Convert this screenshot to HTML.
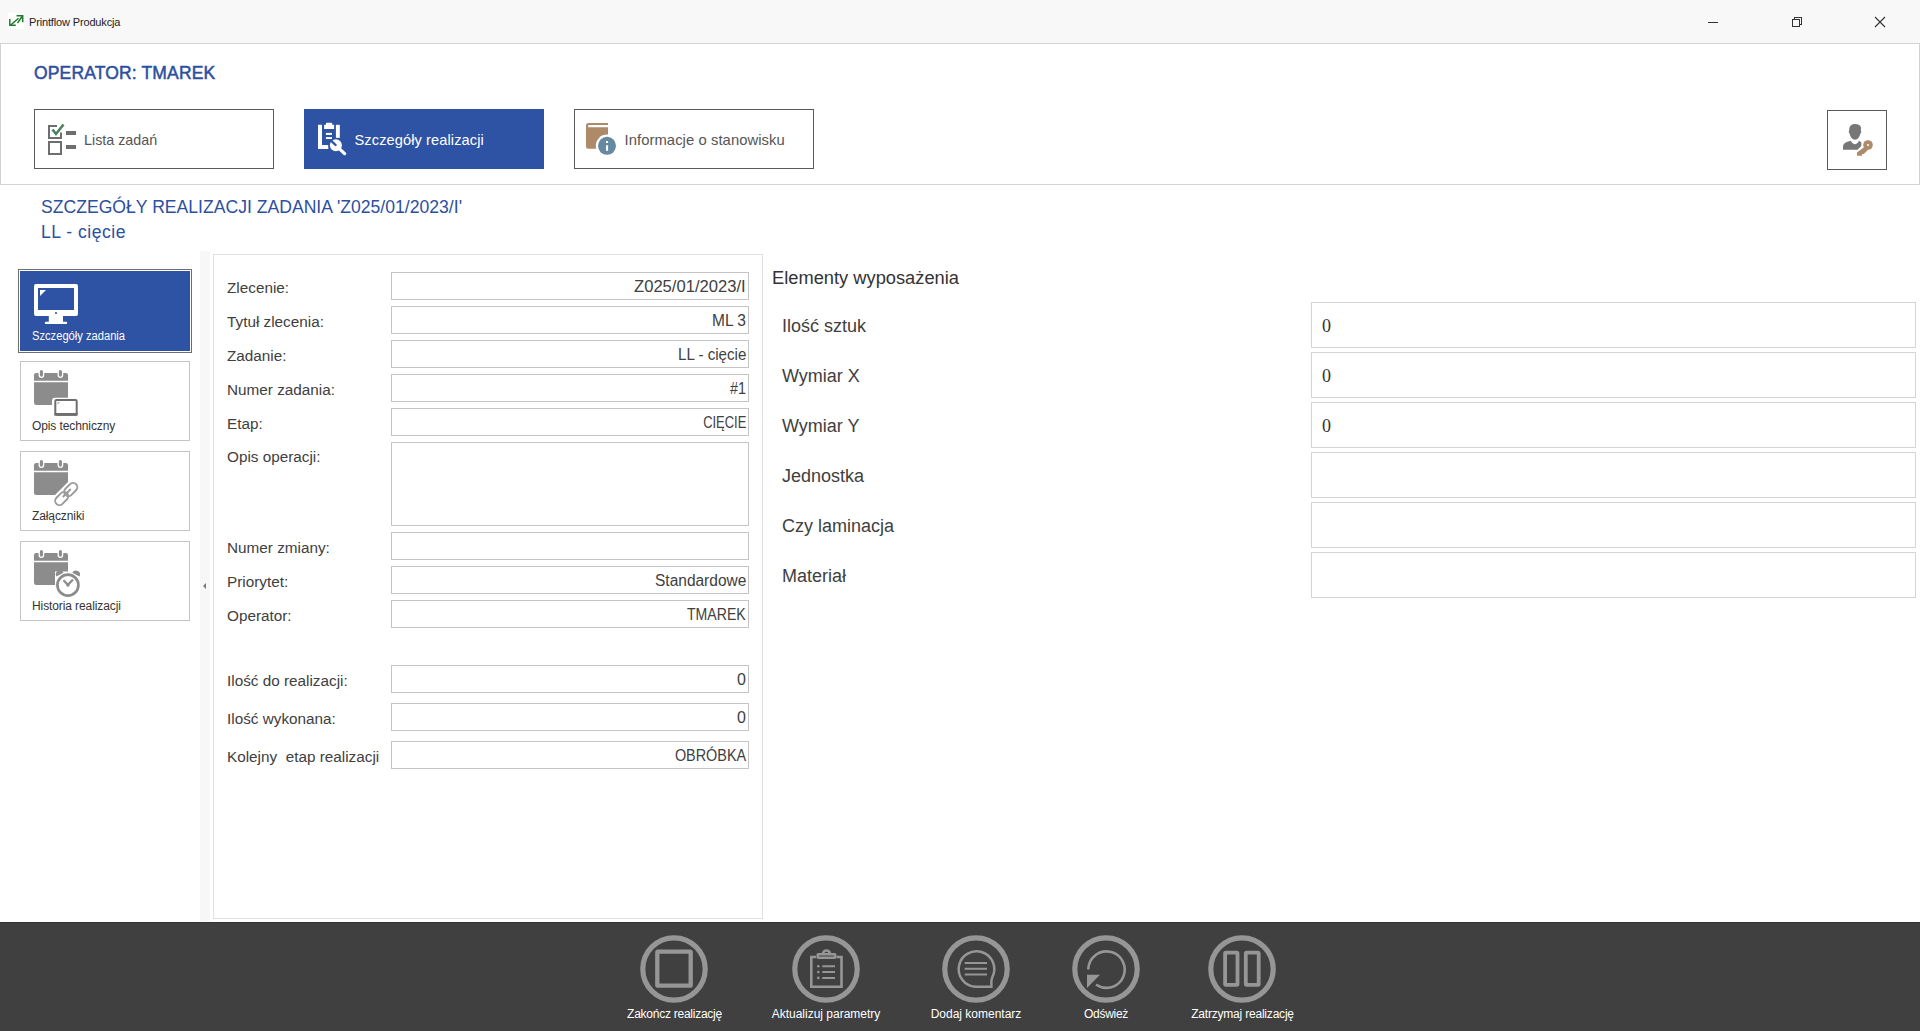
<!DOCTYPE html>
<html><head><meta charset="utf-8">
<style>
*{box-sizing:border-box;margin:0;padding:0}
html,body{width:1920px;height:1031px;overflow:hidden;background:#fff}
body{position:relative;font-family:"Liberation Sans",sans-serif;color:#333}
.a{position:absolute}
.t{position:absolute;white-space:pre;line-height:1}
svg{position:absolute;overflow:visible}
.hbtn{position:absolute;top:109px;width:240px;height:60px;border:1px solid #5a5a5a;background:#fff}
.hbtn.sel{background:#2e52a4;border-color:#2e52a4}
.side{position:absolute;left:20px;width:170px;height:80px;border:1px solid #c4c4c4;background:#fff}
.side.sel{background:#2e52a4;border:none;outline:1px solid #fff;box-shadow:0 0 0 2px #6e6e6e}
.lbl{position:absolute;left:227px;font-size:15.3px;color:#404040;white-space:pre;line-height:1}
.inp{position:absolute;left:391px;width:358px;height:28px;border:1px solid #c4c4c4;background:#fff}
.val{position:absolute;right:2px;top:5.5px;font-size:16px;color:#404040;white-space:pre;line-height:1;transform-origin:100% 50%}
.rl{position:absolute;left:782px;font-size:18px;color:#404040;white-space:pre;line-height:1}
.rinp{position:absolute;left:1311px;width:605px;height:46px;border:1px solid #d4d4d4;background:#fff}
.rv{position:absolute;left:10px;top:14px;font-family:"Liberation Serif",serif;font-size:18px;color:#333;line-height:1}
.sl{position:absolute;left:32px;font-size:12px;color:#333;white-space:pre;line-height:1}
.bl{position:absolute;top:1008px;font-size:12px;color:#fff;white-space:pre;line-height:1;transform:translateX(-50%)}
</style></head>
<body>

<div class="a" style="left:0;top:0;width:1920px;height:43px;background:#f8f8f8"></div>
<svg style="left:8px;top:13px" width="16" height="16" viewBox="0 0 16 16">
<rect x="0" y="0" width="16" height="16" fill="#fff"/>
<g stroke="#1e7b2c" stroke-width="1.5" fill="none">
<path d="M10.5 5.2 L2.5 12.2"/><path d="M1.8 6 V12.3 H7.8"/>
<path d="M14 3.5 L9.5 10.2"/><path d="M8.5 2.8 H14.7 V9.3"/>
</g></svg>
<div class="t" style="left:29px;top:17px;font-size:11px;color:#222;letter-spacing:-0.15px">Printflow Produkcja</div>
<svg style="left:1700px;top:10px" width="200" height="25" viewBox="0 0 200 25">
<g stroke="#333" stroke-width="1" fill="none" shape-rendering="crispEdges">
<path d="M8 12.5 H18"/>
<rect x="92.5" y="9.5" width="7" height="7"/>
<path d="M94.5 9.5 V7.5 H101.5 V14.5 H99.5"/>
</g>
<g stroke="#333" stroke-width="1.1" fill="none">
<path d="M175 7 L185 17 M185 7 L175 17"/>
</g></svg>
<div class="a" style="left:0;top:43px;width:1920px;height:142px;border:1px solid #d2d2d2;background:#fff"></div>
<div class="t" style="left:34px;top:65px;font-size:17.5px;font-weight:normal;-webkit-text-stroke:0.5px #2c4f9f;color:#2c4f9f;letter-spacing:0.15px">OPERATOR: TMAREK</div>
<div class="hbtn" style="left:34px"></div>
<div class="hbtn sel" style="left:304px"></div>
<div class="hbtn" style="left:574px"></div>
<div class="a" style="left:1827px;top:110px;width:60px;height:60px;border:1px solid #5a5a5a;background:#fff"></div>
<svg style="left:40px;top:115px" width="50" height="50" viewBox="0 0 50 50">
<g fill="none" stroke="#6e6e6e" stroke-width="2">
<path d="M17 11 H9 V23 H21 V17.5"/>
<rect x="9" y="27" width="12" height="12"/>
</g>
<rect x="26" y="16" width="10" height="4" fill="#6e6e6e"/>
<rect x="26" y="30" width="10" height="4" fill="#6e6e6e"/>
<path d="M12.5 14.5 L16 19 L23.5 9.5" fill="none" stroke="#4e8060" stroke-width="2.6"/>
</svg>
<div class="t" style="left:84px;top:132.5px;font-size:14.3px;color:#555">Lista zadań</div>
<svg style="left:305px;top:112px" width="50" height="50" viewBox="0 0 50 50">
<g fill="#fff">
<path d="M13 12.8 H17 V33 H23.3 V37 H13 Z"/>
<rect x="30.9" y="12.8" width="3.9" height="13.1"/>
<rect x="19.1" y="12.8" width="10" height="4.2"/>
<rect x="20.9" y="10.7" width="6.3" height="3" rx="1"/>
<rect x="20.9" y="20.9" width="6.1" height="2"/>
<rect x="20.9" y="25.1" width="6.1" height="1.9"/>
</g>
<circle cx="30.9" cy="33.2" r="7.4" fill="#2e52a4"/>
<circle cx="30.9" cy="33.2" r="6" fill="#fff"/>
<path d="M26 28.6 L30.6 33" stroke="#2e52a4" stroke-width="2.3" stroke-linecap="round"/>
<path d="M34.2 36.6 L39.6 41.6" stroke="#fff" stroke-width="3.3" stroke-linecap="round"/>
</svg>
<div class="t" style="left:354.5px;top:132.5px;font-size:14.6px;color:#fff;letter-spacing:0.1px">Szczegóły realizacji</div>
<svg style="left:578px;top:115px" width="50" height="48" viewBox="0 0 50 48">
<path d="M8 10.5 Q8 8 10.5 8 H30 V10 H10.2 V12.3 H30 V24.5 A11 11 0 0 0 18.5 35 V33.7 H10.5 Q8 33.7 8 31.2 Z" fill="#ad8a68"/>
<circle cx="29" cy="30.8" r="11.2" fill="#fff"/><circle cx="29" cy="30.8" r="9" fill="#6589a0"/>
<rect x="28" y="26" width="2.1" height="2" fill="#fff"/>
<rect x="28" y="30.3" width="2.1" height="5.5" fill="#fff"/>
</svg>
<div class="t" style="left:624.5px;top:133px;font-size:14.8px;color:#555;letter-spacing:0.07px">Informacje o stanowisku</div>
<svg style="left:1820px;top:100px" width="100" height="90" viewBox="0 0 100 90">
<path d="M29.2 30.5 C29 26.5 31 24 35 24 C38 24 40 25 40.5 26.5 C41.2 27 41.2 29 40.8 30.5 C41.5 31 41.3 33 40.4 33.5 C39.7 37 37.5 39.7 35 39.7 C32.5 39.7 30.3 37 29.6 33.5 C28.7 33 28.5 31 29.2 30.5 Z" fill="#777"/>
<path d="M23 49.8 V47 C23 44 25 42.5 27.5 41.8 L30.8 40.8 C32 43 33.5 44.2 34.8 44.2 C36.5 44.2 38 43 39 40.8 L41.3 42.3 V46 L37.5 49.8 Z" fill="#777"/>
<circle cx="48" cy="45" r="4.8" fill="#ad8a68"/>
<circle cx="48" cy="45" r="1" fill="#fff"/>
<path d="M45.3 46.3 L48.4 49.4 L43.8 54 H42 V55.8 H37 V52.6 Z" fill="#ad8a68"/>
</svg>
<div class="t" style="left:41px;top:198.5px;font-size:17.6px;color:#2c4f9f">SZCZEGÓŁY REALIZACJI ZADANIA 'Z025/01/2023/I'</div>
<div class="t" style="left:41px;top:223.5px;font-size:17.6px;color:#2c4f9f;letter-spacing:0.5px">LL - cięcie</div>
<div class="side sel" style="top:271px"></div>
<div class="side" style="top:361px"></div>
<div class="side" style="top:451px"></div>
<div class="side" style="top:541px"></div>
<svg style="left:34px;top:284px" width="44" height="40" viewBox="0 0 44 40">
<path fill="#fff" fill-rule="evenodd" d="M2 0 H42 Q44 0 44 2 V30 Q44 32 42 32 H2 Q0 32 0 30 V2 Q0 0 2 0 Z M4 4 V26 H40 V4 Z"/>
<path fill="#fff" d="M6 6 H12 L6 12 Z"/>
<rect x="14.8" y="32" width="14.2" height="6" fill="#fff"/>
<rect x="10.8" y="37.8" width="22.3" height="2.2" rx="1" fill="#fff"/>
<circle cx="22" cy="29" r="1" fill="#2e52a4"/>
</svg>
<div class="t" style="left:32px;top:329.8px;font-size:12px;color:#fff;transform:scaleX(0.93);transform-origin:0 50%">Szczegóły zadania</div>
<svg style="left:34px;top:373px" width="50" height="50" viewBox="0 0 50 50">
<path d="M0 2.2 Q0 0 2.2 0 H31.8 Q34 0 34 2.2 V7.7 H0 Z" fill="#8c8c8c"/>
<g fill="#8c8c8c" stroke="#fff" stroke-width="1.3"><rect x="5.2" y="-3.6" width="4.4" height="7.9" rx="2.2"/><rect x="24.2" y="-3.6" width="4.4" height="7.9" rx="2.2"/></g>
<path d="M0 9.2 H34 V24.8 H21 Q18 24.8 18 27.8 V32 H2.2 Q0 32 0 29.8 Z" fill="#8c8c8c"/>
<rect x="21.3" y="27.1" width="21.4" height="14.6" rx="1.2" fill="#fff" stroke="#6e6e6e" stroke-width="2"/>
<rect x="20.3" y="39.9" width="23.4" height="2.8" rx="1" fill="#6e6e6e"/>
<path d="M23.5 29.2 H26 L23.5 31.7 Z" fill="#aaa"/>
</svg>
<div class="t" style="left:32px;top:419.5px;font-size:12px;color:#333;letter-spacing:-0.1px">Opis techniczny</div>
<svg style="left:34px;top:463px" width="50" height="50" viewBox="0 0 50 50">
<path d="M0 2.2 Q0 0 2.2 0 H31.8 Q34 0 34 2.2 V7.7 H0 Z" fill="#8c8c8c"/>
<g fill="#8c8c8c" stroke="#fff" stroke-width="1.3"><rect x="5.2" y="-3.6" width="4.4" height="7.9" rx="2.2"/><rect x="24.2" y="-3.6" width="4.4" height="7.9" rx="2.2"/></g>
<path d="M0 9.2 H34 V19 L21 32 H2.2 Q0 32 0 29.8 Z" fill="#8c8c8c"/>
<g fill="none" stroke="#9a9a9a" stroke-width="1.9">
<rect x="32.5" y="19" width="8.5" height="15" rx="4.25" transform="rotate(45 36.75 26.5)"/>
<rect x="23.5" y="28" width="8.5" height="15" rx="4.25" transform="rotate(45 27.75 35.5)"/>
<path d="M28.8 34 L36.8 26"/>
</g>
</svg>
<div class="t" style="left:32px;top:509.5px;font-size:12px;color:#333;letter-spacing:-0.1px">Załączniki</div>
<svg style="left:34px;top:553px" width="50" height="50" viewBox="0 0 50 50">
<path d="M0 2.2 Q0 0 2.2 0 H31.8 Q34 0 34 2.2 V7.7 H0 Z" fill="#8c8c8c"/>
<g fill="#8c8c8c" stroke="#fff" stroke-width="1.3"><rect x="5.2" y="-3.6" width="4.4" height="7.9" rx="2.2"/><rect x="24.2" y="-3.6" width="4.4" height="7.9" rx="2.2"/></g>
<path d="M0 9.2 H34 V18.5 H21 V32 H2.2 Q0 32 0 29.8 Z" fill="#8c8c8c"/>
<circle cx="33.9" cy="32.1" r="10.5" fill="#fff" stroke="#8c8c8c" stroke-width="2.7"/>
<path d="M22.3 23.5 A4 4 0 0 1 29.5 19.8 Z" fill="#8c8c8c"/>
<path d="M45.5 23.5 A4 4 0 0 0 38.3 19.8 Z" fill="#8c8c8c"/>
<path d="M29.4 27.2 L33.9 31.8 L39 26.5" fill="none" stroke="#8c8c8c" stroke-width="2.2"/>
<circle cx="33.9" cy="32" r="1.7" fill="#8c8c8c"/>
</svg>
<div class="t" style="left:32px;top:599.8px;font-size:12px;color:#333;letter-spacing:-0.1px">Historia realizacji</div>
<div class="a" style="left:200px;top:251px;width:10px;height:670px;background:#f7f7f7"></div>
<svg style="left:200px;top:580px" width="10" height="12" viewBox="0 0 10 12"><path d="M3 6 L6 3 V9 Z" fill="#777"/></svg>
<div class="a" style="left:213px;top:254px;width:550px;height:665px;border:1px solid #e0e0e0"></div>
<div class="lbl" style="top:280.3px">Zlecenie:</div>
<div class="inp" style="top:272px;height:28px"><div class="val" style="transform:scaleX(1.037)">Z025/01/2023/I</div></div>
<div class="lbl" style="top:314.3px">Tytuł zlecenia:</div>
<div class="inp" style="top:306px;height:28px"><div class="val" style="transform:scaleX(0.97)">ML 3</div></div>
<div class="lbl" style="top:348.3px">Zadanie:</div>
<div class="inp" style="top:340px;height:28px"><div class="val" style="transform:scaleX(0.944)">LL - cięcie</div></div>
<div class="lbl" style="top:382.3px">Numer zadania:</div>
<div class="inp" style="top:374px;height:28px"><div class="val" style="transform:scaleX(0.89)">#1</div></div>
<div class="lbl" style="top:416.3px">Etap:</div>
<div class="inp" style="top:408px;height:28px"><div class="val" style="transform:scaleX(0.81)">CIĘCIE</div></div>
<div class="lbl" style="top:449.3px">Opis operacji:</div>
<div class="inp" style="top:442px;height:84px"></div>
<div class="lbl" style="top:540.3px">Numer zmiany:</div>
<div class="inp" style="top:532px;height:28px"></div>
<div class="lbl" style="top:574.3px">Priorytet:</div>
<div class="inp" style="top:566px;height:28px"><div class="val" style="transform:scaleX(0.968)">Standardowe</div></div>
<div class="lbl" style="top:608.3px">Operator:</div>
<div class="inp" style="top:600px;height:28px"><div class="val" style="transform:scaleX(0.88)">TMAREK</div></div>
<div class="lbl" style="top:673.3px">Ilość do realizacji:</div>
<div class="inp" style="top:665px;height:28px"><div class="val" style="transform:scaleX(1)">0</div></div>
<div class="lbl" style="top:711.3px">Ilość wykonana:</div>
<div class="inp" style="top:703px;height:28px"><div class="val" style="transform:scaleX(1)">0</div></div>
<div class="lbl" style="top:749.3px">Kolejny  etap realizacji</div>
<div class="inp" style="top:741px;height:28px"><div class="val" style="transform:scaleX(0.9)">OBRÓBKA</div></div>
<div class="t" style="left:772px;top:268.8px;font-size:18.3px;color:#333">Elementy wyposażenia</div>
<div class="rl" style="top:316.8px">Ilość sztuk</div>
<div class="rinp" style="top:302px"><div class="rv">0</div></div>
<div class="rl" style="top:366.8px">Wymiar X</div>
<div class="rinp" style="top:352px"><div class="rv">0</div></div>
<div class="rl" style="top:416.8px">Wymiar Y</div>
<div class="rinp" style="top:402px"><div class="rv">0</div></div>
<div class="rl" style="top:466.8px">Jednostka</div>
<div class="rinp" style="top:452px"></div>
<div class="rl" style="top:516.8px">Czy laminacja</div>
<div class="rinp" style="top:502px"></div>
<div class="rl" style="top:566.8px">Materiał</div>
<div class="rinp" style="top:552px"></div>
<div class="a" style="left:0;top:922px;width:1920px;height:109px;background:#404040;border-top:1px solid #333"></div>
<svg style="left:0;top:0" width="1920" height="1031" viewBox="0 0 1920 1031">
<circle cx="674" cy="969" r="31.2" fill="none" stroke="#969696" stroke-width="5.2"/>
<circle cx="826" cy="969" r="31.2" fill="none" stroke="#969696" stroke-width="5.2"/>
<circle cx="976" cy="969" r="31.2" fill="none" stroke="#969696" stroke-width="5.2"/>
<circle cx="1106" cy="969" r="31.2" fill="none" stroke="#969696" stroke-width="5.2"/>
<circle cx="1242" cy="969" r="31.2" fill="none" stroke="#969696" stroke-width="5.2"/>
<rect x="657.3" y="951.7" width="33.4" height="34" rx="0.8" fill="none" stroke="#969696" stroke-width="4.3"/>
<g fill="none" stroke="#969696" stroke-width="2.6">
<path d="M816 957 H811.3 V986.7 H841.5 V957 H836.5"/>
<rect x="817.7" y="954.3" width="17.5" height="3.4" rx="0.6"/>
<path d="M823 954 A3.5 3.5 0 0 1 830 954"/>
<path d="M822.3 966.3 H835 M822.3 972.1 H835 M822.3 977.9 H835" stroke-width="2"/>
</g>
<g fill="#969696"><circle cx="818.3" cy="966.3" r="1.3"/><circle cx="818.3" cy="972.1" r="1.3"/><circle cx="818.3" cy="977.9" r="1.3"/></g>
<path d="M992.4 977 A17.8 17.8 0 1 0 975.2 986.8 H991.4 V980.5 Z" fill="none" stroke="#969696" stroke-width="2.5"/>
<path d="M964.7 962.9 H987 M964.7 968.75 H987 M964.7 974.6 H987" stroke="#969696" stroke-width="2"/>
<path d="M1088.3 969.5 A18.2 18.2 0 1 1 1096 984.5" fill="none" stroke="#969696" stroke-width="2.6"/>
<path d="M1087 974.7 H1100 L1087 988 Z" fill="#969696"/>
<rect x="1225.1" y="952.6" width="12.4" height="32.2" rx="0.8" fill="none" stroke="#969696" stroke-width="3.8"/>
<rect x="1245.8" y="952.6" width="12.9" height="32.2" rx="0.8" fill="none" stroke="#969696" stroke-width="3.8"/>
</svg>
<div class="bl" style="left:674.5px;letter-spacing:-0.25px">Zakończ realizację</div>
<div class="bl" style="left:826px;letter-spacing:0px">Aktualizuj parametry</div>
<div class="bl" style="left:976px;letter-spacing:0px">Dodaj komentarz</div>
<div class="bl" style="left:1106px;letter-spacing:-0.3px">Odśwież</div>
<div class="bl" style="left:1242.5px;letter-spacing:-0.2px">Zatrzymaj realizację</div>
</body></html>
